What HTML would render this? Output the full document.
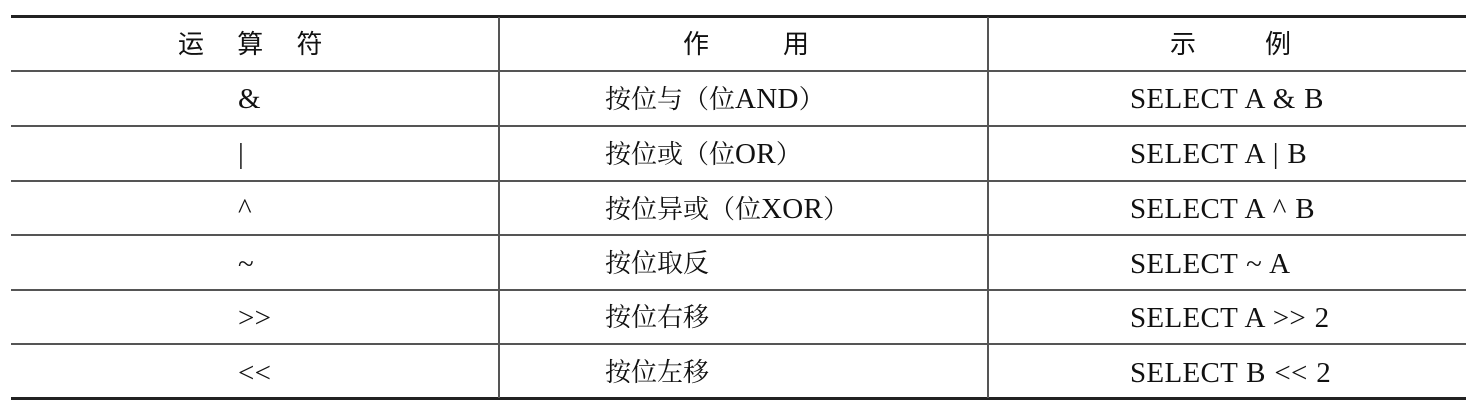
<!DOCTYPE html>
<html><head><meta charset="utf-8"><style>
html,body{margin:0;padding:0;background:#fff;width:1466px;height:402px;overflow:hidden;position:relative}
.h{position:absolute;left:11px;right:0;background:#222}
.v{position:absolute;width:2px;background:#555;top:17px;height:381px}
.t{position:absolute;font-family:"Liberation Serif","Noto Serif CJK SC",serif;font-size:26px;color:#111;line-height:30px;white-space:pre}
.l{font-size:29px;word-spacing:1px;letter-spacing:0.3px}
.hd{position:absolute;font-family:"Liberation Sans","Noto Sans CJK SC",sans-serif;font-size:26px;color:#111;line-height:30px;white-space:pre}
</style></head><body>
<div class="h" style="top:15px;height:3px"></div>
<div class="h" style="top:70px;height:2px;background:#555"></div>
<div class="h" style="top:125px;height:2px;background:#555"></div>
<div class="h" style="top:180px;height:2px;background:#555"></div>
<div class="h" style="top:234px;height:2px;background:#555"></div>
<div class="h" style="top:289px;height:2px;background:#555"></div>
<div class="h" style="top:343px;height:2px;background:#555"></div>
<div class="h" style="top:397px;height:3px"></div>
<div class="v" style="left:498px"></div>
<div class="v" style="left:987px"></div>

<div class="hd" style="left:178px;top:29px;letter-spacing:13px">运 算 符</div>
<div class="hd" style="left:683px;top:29px">作<span style="display:inline-block;width:74px"></span>用</div>
<div class="hd" style="left:1170px;top:29px">示<span style="display:inline-block;width:69px"></span>例</div>

<div class="t l" style="left:238px;top:84px">&amp;</div>
<div class="t l" style="left:238px;top:139px">|</div>
<div class="t l" style="left:238px;top:194px">^</div>
<div class="t l" style="left:238px;top:249px">~</div>
<div class="t l" style="left:238px;top:303px">&gt;&gt;</div>
<div class="t l" style="left:238px;top:358px">&lt;&lt;</div>

<div class="t" style="left:605px;top:84px">按位与（位<span class="l">AND</span>）</div>
<div class="t" style="left:605px;top:139px">按位或（位<span class="l">OR</span>）</div>
<div class="t" style="left:605px;top:194px">按位异或（位<span class="l">XOR</span>）</div>
<div class="t" style="left:605px;top:249px">按位取反</div>
<div class="t" style="left:605px;top:303px">按位右移</div>
<div class="t" style="left:605px;top:358px">按位左移</div>

<div class="t l" style="left:1130px;top:84px">SELECT A &amp; B</div>
<div class="t l" style="left:1130px;top:139px">SELECT A | B</div>
<div class="t l" style="left:1130px;top:194px">SELECT A ^ B</div>
<div class="t l" style="left:1130px;top:249px">SELECT ~ A</div>
<div class="t l" style="left:1130px;top:303px">SELECT A &gt;&gt; 2</div>
<div class="t l" style="left:1130px;top:358px">SELECT B &lt;&lt; 2</div>
</body></html>
